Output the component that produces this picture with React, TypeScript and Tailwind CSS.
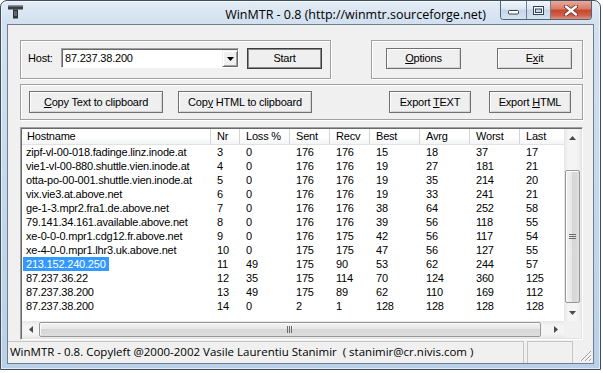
import React from "react";

const rows: string[][] = [
  ["zipf-vl-00-018.fadinge.linz.inode.at", "3", "0", "176", "176", "15", "18", "37", "17"],
  ["vie1-vl-00-880.shuttle.vien.inode.at", "4", "0", "176", "176", "19", "27", "181", "21"],
  ["otta-po-00-001.shuttle.vien.inode.at", "5", "0", "176", "176", "19", "35", "214", "20"],
  ["vix.vie3.at.above.net", "6", "0", "176", "176", "19", "33", "241", "21"],
  ["ge-1-3.mpr2.fra1.de.above.net", "7", "0", "176", "176", "38", "64", "252", "58"],
  ["79.141.34.161.available.above.net", "8", "0", "176", "176", "39", "56", "118", "55"],
  ["xe-0-0-0.mpr1.cdg12.fr.above.net", "9", "0", "176", "175", "42", "56", "117", "54"],
  ["xe-4-0-0.mpr1.lhr3.uk.above.net", "10", "0", "175", "175", "47", "56", "127", "55"],
  ["213.152.240.250", "11", "49", "175", "90", "53", "62", "244", "57"],
  ["87.237.36.22", "12", "35", "175", "114", "70", "124", "360", "125"],
  ["87.237.38.200", "13", "49", "175", "89", "62", "110", "169", "112"],
  ["87.237.38.200", "14", "0", "2", "1", "128", "128", "128", "128"],
];

const heads = ["Hostname", "Nr", "Loss %", "Sent", "Recv", "Best", "Avrg", "Worst", "Last"];
const colW = [
  "w-[189px]",
  "w-[29px]",
  "w-[50px]",
  "w-[40px]",
  "w-[40px]",
  "w-[50px]",
  "w-[50px]",
  "w-[50px]",
  "w-[60px]",
];

const btn =
  "flex items-center justify-center border border-[#707070] bg-[#efefef] shadow-[inset_1px_1px_0_#ffffff,inset_-1px_-1px_0_#d4d4d4] text-black";

const group =
  "border border-[#a0a0a0] shadow-[inset_1px_1px_0_#ffffff,1px_1px_0_#ffffff]";

function TitleIcon() {
  return (
    <svg width="15" height="14" viewBox="0 0 15 14" className="ml-[7px] mt-[4px] shrink-0">
      <rect x="0" y="0.5" width="15" height="4" fill="#3b3f44" />
      <rect x="0" y="0.5" width="15" height="1" fill="#8d969e" />
      <rect x="5" y="4.5" width="5" height="9" fill="#2f3337" />
      <rect x="6" y="6" width="3" height="5" fill="#5d656c" />
    </svg>
  );
}

function ArrowUp() {
  return (
    <svg width="7" height="4" viewBox="0 0 7 4">
      <path d="M0 4 L3.5 0 L7 4 Z" fill="#4a4a4a" />
    </svg>
  );
}
function ArrowDown() {
  return (
    <svg width="7" height="4" viewBox="0 0 7 4">
      <path d="M0 0 L3.5 4 L7 0 Z" fill="#4a4a4a" />
    </svg>
  );
}
function ArrowLeft() {
  return (
    <svg width="4" height="7" viewBox="0 0 4 7">
      <path d="M4 0 L0 3.5 L4 7 Z" fill="#4a4a4a" />
    </svg>
  );
}
function ArrowRight() {
  return (
    <svg width="4" height="7" viewBox="0 0 4 7">
      <path d="M0 0 L4 3.5 L0 7 Z" fill="#4a4a4a" />
    </svg>
  );
}

export default function App() {
  return (
    <div className="w-[603px] h-[373px] bg-white overflow-hidden font-['Liberation_Sans',Arial,sans-serif] text-[11px] tracking-[-0.2px] text-black">
      <div className="w-[601px] h-[370px] flex flex-col border border-[#3f4e5e] rounded-t-[7px] bg-[linear-gradient(180deg,#e3ecf6_0px,#d3e1ef_20px,#c3d7eb_60%,#b9d0e8_100%)] shadow-[inset_0_0_0_1px_rgba(255,255,255,0.6)]">
        {/* Title bar */}
        <div className="h-[23px] flex items-start shrink-0">
          <TitleIcon />
          <div className="flex-1 flex justify-end pr-[14px] pt-[6px] font-['Open_Sans',sans-serif] text-[12.5px] leading-[15px] tracking-normal text-black">
            WinMTR - 0.8 (http://winmtr.sourceforge.net)
          </div>
          <div className="flex h-[19px] mr-[8px] rounded-b-[4px] border border-t-0 border-[#4f6379] overflow-hidden shrink-0">
            <div className="w-[26px] h-full flex items-center justify-center border-r border-[#6d8097] bg-[linear-gradient(180deg,#f2f6fb_0%,#dde7f2_45%,#c6d5e6_50%,#d6e3f0_100%)]">
              <svg width="11" height="5" viewBox="0 0 11 5" className="mt-[5px]">
                <rect x="0.5" y="0.5" width="10" height="3.5" rx="1" fill="#ffffff" stroke="#2f4258" />
              </svg>
            </div>
            <div className="w-[24px] h-full flex items-center justify-center border-r border-[#6d8097] bg-[linear-gradient(180deg,#f2f6fb_0%,#dde7f2_45%,#c6d5e6_50%,#d6e3f0_100%)]">
              <svg width="11" height="9" viewBox="0 0 11 9">
                <rect x="0.5" y="0.5" width="10" height="8" fill="#ffffff" stroke="#2f4258" />
                <rect x="2.5" y="3" width="6" height="3.5" fill="#c9d6e4" stroke="#2f4258" />
              </svg>
            </div>
            <div className="w-[40px] h-full flex items-center justify-center bg-[linear-gradient(180deg,#e9a99b_0%,#d97b66_45%,#c4452c_50%,#d0614a_80%,#e0937f_100%)]">
              <svg width="14" height="11" viewBox="0 0 14 11">
                <path d="M2 1.5 L12 9.5 M12 1.5 L2 9.5" stroke="#6a2a20" strokeWidth="4" strokeLinecap="round" />
                <path d="M2 1.5 L12 9.5 M12 1.5 L2 9.5" stroke="#ffffff" strokeWidth="2.4" strokeLinecap="round" />
              </svg>
            </div>
          </div>
        </div>

        {/* Client area */}
        <div className="mx-[6px] mb-[5px] h-[340px] border border-[#6c7e92] bg-[#f0f0f0] flex flex-col shrink-0">
          <div className="pt-[15px] pl-[12px] flex flex-col">
            {/* Top row */}
            <div className="flex">
              <div className={`${group} w-[311px] h-[39px] flex items-start pt-[7px] pl-[7px]`}>
                <div className="w-[33px] h-[20px] leading-[20px]">Host:</div>
                <div className="w-[178px] h-[20px] flex border border-t-[#a0a0a0] border-l-[#a0a0a0] border-b-white border-r-white shadow-[inset_1px_1px_0_#696969] bg-white pt-[1px] pl-[1px]">
                  <div className="flex-1 leading-[17px] pl-[2px]">87.237.38.200</div>
                  <div className="w-[16px] h-[17px] flex items-center justify-center bg-[#f0f0f0] border border-t-[#f0f0f0] border-l-[#f0f0f0] border-b-[#696969] border-r-[#696969] shadow-[inset_1px_1px_0_#ffffff,inset_-1px_-1px_0_#a0a0a0]">
                    <svg width="7" height="4" viewBox="0 0 7 4">
                      <path d="M0 0 L7 0 L3.5 4 Z" fill="#000" />
                    </svg>
                  </div>
                </div>
                <div className="ml-[8px] w-[75px] h-[21px] flex items-center justify-center border border-[#3c3c3c] bg-[#efefef] shadow-[inset_0_0_0_1px_#8a8a8a]">
                  Start
                </div>
              </div>
              <div className={`${group} ml-[40px] w-[212px] h-[39px] flex items-start pt-[7px] pl-[14px]`}>
                <div className={`${btn} w-[75px] h-[21px]`}>
                  <span><u>O</u>ptions</span>
                </div>
                <div className={`${btn} ml-[36px] w-[75px] h-[21px]`}>
                  <span>E<u>x</u>it</span>
                </div>
              </div>
            </div>

            {/* Second row */}
            <div className={`${group} mt-[5px] w-[563px] h-[36px] flex items-start pt-[6px] pl-[8px] pr-[11px]`}>
              <div className={`${btn} w-[134px] h-[22px]`}>
                <span><u>C</u>opy Text to clipboard</span>
              </div>
              <div className={`${btn} ml-[15px] w-[134px] h-[22px]`}>
                <span>Cop<u>y</u> HTML to clipboard</span>
              </div>
              <div className={`${btn} ml-auto w-[82px] h-[22px]`}>
                <span>Export <u>T</u>EXT</span>
              </div>
              <div className={`${btn} ml-[18px] w-[82px] h-[22px]`}>
                <span>Export <u>H</u>TML</span>
              </div>
            </div>

            {/* List view */}
            <div className="mt-[7px] w-[563px] h-[213px] border border-t-[#a0a0a0] border-l-[#a0a0a0] border-b-white border-r-white shadow-[inset_1px_1px_0_#696969,inset_-1px_-1px_0_#e3e3e3] p-[1px] flex flex-col">
              <div className="flex h-[192px]">
                <div className="w-[542px] bg-white overflow-hidden">
                  <div className="flex h-[16px] bg-[linear-gradient(180deg,#ffffff_0%,#ffffff_55%,#f3f4f6_100%)] border-b border-[#e2e2e2]">
                    {heads.map((h, i) => (
                      <div
                        key={h}
                        className={`${colW[i]} ${i === 0 ? "pl-[5px]" : "pl-[6px]"} shrink-0 border-r border-[#d5d5d5] leading-[15px] whitespace-nowrap overflow-hidden`}
                      >
                        {h}
                      </div>
                    ))}
                  </div>
                  {rows.map((r, ri) => (
                    <div key={ri} className="flex h-[14px] leading-[14px]">
                      {r.map((c, ci) => (
                        <div
                          key={ci}
                          className={`${colW[ci]} ${ci === 0 ? "pl-[4px]" : "pl-[6px]"} shrink-0 whitespace-nowrap overflow-hidden`}
                        >
                          {ci === 0 && ri === 8 ? (
                            <span className="ml-[-3px] px-[3px] inline-block h-[14px] bg-[#3399ff] text-white">{c}</span>
                          ) : (
                            c
                          )}
                        </div>
                      ))}
                    </div>
                  ))}
                </div>
                {/* Vertical scrollbar */}
                <div className="w-[17px] flex flex-col bg-[linear-gradient(90deg,#e6e6e6_0%,#f4f4f4_25%,#f4f4f4_75%,#e9e9e9_100%)]">
                  <div className="h-[17px] flex items-center justify-center">
                    <ArrowUp />
                  </div>
                  <div className="mt-[24px] mx-[1px] h-[133px] rounded-[2px] border border-[#979797] bg-[linear-gradient(90deg,#f2f2f2_0%,#e8e8e8_45%,#d6d6d6_50%,#dedede_100%)] shadow-[inset_1px_1px_0_#fbfbfb] flex items-center justify-center">
                    <svg width="7" height="6" viewBox="0 0 7 6">
                      <path d="M0 0.5 H7 M0 2.5 H7 M0 4.5 H7" stroke="#6b6b6b" strokeWidth="1" />
                    </svg>
                  </div>
                  <div className="flex-1" />
                  <div className="h-[17px] flex items-center justify-center">
                    <ArrowDown />
                  </div>
                </div>
              </div>
              {/* Horizontal scrollbar */}
              <div className="flex h-[17px]">
                <div className="w-[542px] flex bg-[linear-gradient(180deg,#e6e6e6_0%,#f4f4f4_25%,#f4f4f4_75%,#e9e9e9_100%)]">
                  <div className="w-[17px] flex items-center justify-center">
                    <ArrowLeft />
                  </div>
                  <div className="my-[1px] w-[502px] rounded-[2px] border border-[#979797] bg-[linear-gradient(180deg,#f2f2f2_0%,#e8e8e8_45%,#d6d6d6_50%,#dedede_100%)] shadow-[inset_1px_1px_0_#fbfbfb] flex items-center justify-center">
                    <svg width="6" height="7" viewBox="0 0 6 7">
                      <path d="M0.5 0 V7 M2.5 0 V7 M4.5 0 V7" stroke="#6b6b6b" strokeWidth="1" />
                    </svg>
                  </div>
                  <div className="flex-1" />
                  <div className="w-[17px] flex items-center justify-center">
                    <ArrowRight />
                  </div>
                </div>
                <div className="w-[17px] bg-[#f0f0f0]" />
              </div>
            </div>
          </div>

          {/* Status bar */}
          <div className="mt-[1px] h-[22px] flex font-['Open_Sans',sans-serif] text-[11.5px] tracking-normal">
            <div className="w-[516px] border-t border-r border-[#c5c5c5] pl-[2px] leading-[20px] whitespace-pre overflow-hidden">
              WinMTR - 0.8. Copyleft @2000-2002 Vasile Laurentiu Stanimir  ( stanimir@cr.nivis.com )
            </div>
            <div className="ml-[3px] w-[46px] border-t border-l border-r border-[#c5c5c5]" />
            <div className="flex-1 flex items-end justify-end pr-[1px] pb-[1px]">
              <svg width="12" height="12" viewBox="0 0 12 12">
                <path d="M11 2 L2 11 M11 6 L6 11 M11 10 L10 11" stroke="#ffffff" strokeWidth="1" />
                <path d="M11 1 L1 11 M11 5 L5 11 M11 9 L9 11" stroke="#9a9a9a" strokeWidth="1" />
              </svg>
            </div>
          </div>
        </div>
      </div>
    </div>
  );
}
